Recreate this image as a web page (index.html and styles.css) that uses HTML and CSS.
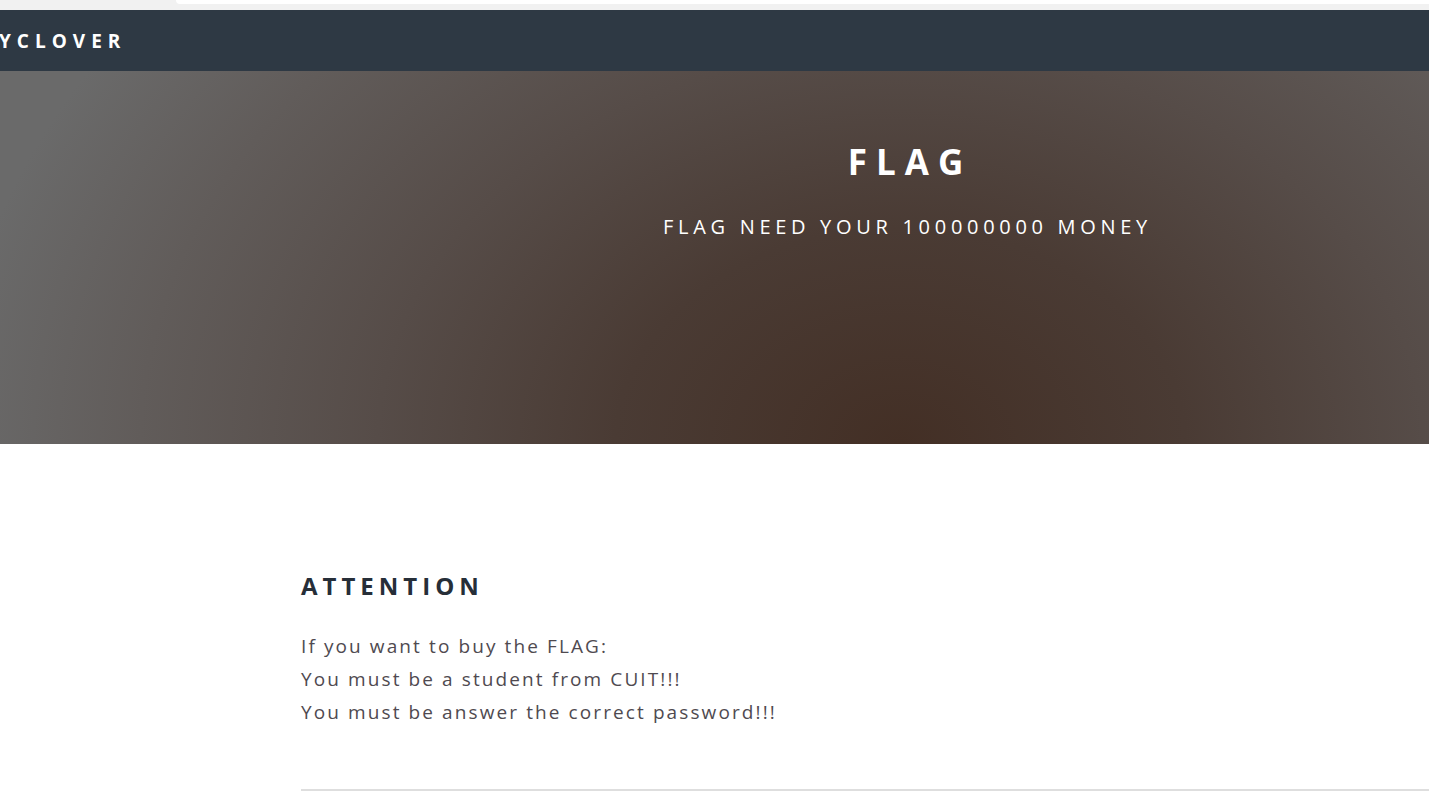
FILE: index.html
```html
<!DOCTYPE html>
<html>
<head>
<meta charset="utf-8">
<link rel="stylesheet" href="styles.css">
</head>
<body>
<div class="chrome"><div class="chrome-tab"></div></div>
<nav class="navbar"><span class="brand">YCLOVER</span></nav>
<header class="hero">
  <div class="hero-inner">
    <h1 class="hero-title">FLAG</h1>
    <p class="hero-sub">FLAG NEED YOUR 100000000 MONEY</p>
  </div>
</header>
<main class="content">
  <h2 class="section-title">ATTENTION</h2>
  <p class="text">If you want to buy the FLAG:<br>You must be a student from CUIT!!!<br>You must be answer the correct password!!!</p>
  <hr class="rule">
</main>
</body>
</html>
```
FILE: styles.css
```css
html, body {
  margin: 0;
  padding: 0;
  overflow: hidden;
  background: #fff;
  font-family: "Open Sans", "Liberation Sans", sans-serif;
}
.chrome {
  height: 10px;
  background: #f1f1f1;
  display: flex;
}
.chrome-tab {
  margin-left: 176px;
  flex: 1;
  height: 4px;
  background: #fff;
  border-bottom-left-radius: 5px;
}
.navbar {
  height: 61px;
  background: #2e3944;
  display: flex;
  align-items: center;
}
.brand {
  margin-left: -1px;
  color: #fff;
  font-weight: 700;
  font-size: 19px;
  letter-spacing: 6px;
}
.hero {
  height: 373px;
  background: radial-gradient(ellipse 950px 720px at 63% 100%, #432f25 0%, #4a3b34 30%, #564c48 55%, #615c5a 80%, #6a6a6a 100%);
  display: flex;
  justify-content: center;
  padding-left: 382px;
  box-sizing: border-box;
}
.hero-inner {
  text-align: center;
  padding-top: 67px;
}
.hero-title {
  margin: 0;
  color: #fff;
  font-weight: 700;
  font-size: 35px;
  line-height: 48px;
  letter-spacing: 9px;
  padding-left: 9px;
}
.hero-sub {
  margin: 27px 0 0;
  color: #fff;
  font-size: 20px;
  line-height: 28px;
  letter-spacing: 4.7px;
  padding-left: 4px;
}
.content {
  padding: 126px 0 0 301px;
}
.section-title {
  margin: 0;
  color: #262e38;
  font-weight: 700;
  font-size: 24px;
  line-height: 32px;
  letter-spacing: 5px;
}
.text {
  margin: 28px 0 0;
  color: #4f4a50;
  font-size: 19px;
  line-height: 33px;
  letter-spacing: 2.1px;
}
.rule {
  margin: 60px 0 0;
  border: 0;
  height: 2px;
  background: #dedede;
}
```
